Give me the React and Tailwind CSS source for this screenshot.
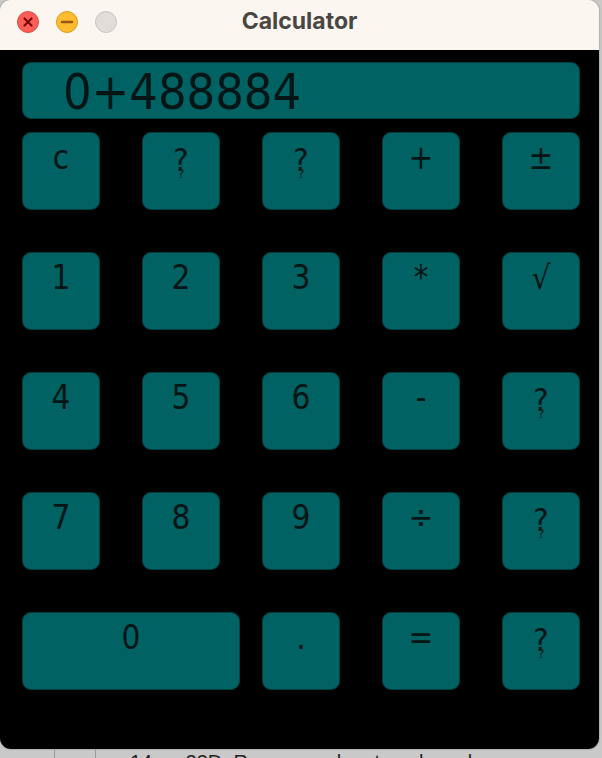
import React from "react";

const font = { fontFamily: '"DejaVu Sans Condensed", "DejaVu Sans", sans-serif', fontStretch: "condensed" };

function Q() {
  return (
    <div className="flex flex-col items-center leading-none">
      <span className="text-[32px] leading-none">?</span>
      <span className="text-[13px] leading-none -mt-[9px]">?</span>
    </div>
  );
}

function Key({ label, className = "w-[78px]" }) {
  return (
    <div
      className={`h-[78px] ${className} shrink-0 rounded-[9px] bg-[#006262] border border-[#023f3f] flex justify-center pt-[7px] text-[#051515]`}
      style={font}
    >
      {label === "?" ? (
        <div className="pt-[4px]"><Q /></div>
      ) : (
        <span className="text-[33px] leading-[1.1]">{label}</span>
      )}
    </div>
  );
}

export default function App() {
  const rows = [
    ["c", "?", "?", "+", "±"],
    ["1", "2", "3", "*", "√"],
    ["4", "5", "6", "-", "?"],
    ["7", "8", "9", "÷", "?"],
  ];
  return (
    <div className="w-[602px] h-[758px] overflow-hidden bg-[#c9c9c9] flex flex-col relative">
      <div className="w-[599px] h-[749px] rounded-[11px] overflow-hidden flex flex-col shrink-0 shadow-[0_0_2px_rgba(0,0,0,0.4)]">
        <div className="h-[50px] bg-[#fcf6f0] flex items-center relative shrink-0">
          <div className="flex items-center gap-[17px] pl-[17px] pb-[6px]">
            <div className="w-[22px] h-[22px] rounded-full bg-[#fd5f58] border border-[#de4640] flex items-center justify-center">
              <svg width="12" height="12" viewBox="0 0 12 12">
                <path d="M2.5 2.5 L9.5 9.5 M9.5 2.5 L2.5 9.5" stroke="#7a0b07" strokeWidth="2.2" strokeLinecap="round" />
              </svg>
            </div>
            <div className="w-[22px] h-[22px] rounded-full bg-[#febc2e] border border-[#dc9b20] flex items-center justify-center">
              <svg width="14" height="4" viewBox="0 0 14 4">
                <path d="M2 2 L12 2" stroke="#985712" strokeWidth="2.5" strokeLinecap="round" />
              </svg>
            </div>
            <div className="w-[22px] h-[22px] rounded-full bg-[#e2ddd9] border border-[#c8c3bf]" />
          </div>
          <div
            className="absolute left-0 right-0 top-[4px] text-center text-[23px] font-bold text-[#4a4643]"
            style={{ fontFamily: 'Inter, "Liberation Sans", sans-serif' }}
          >
            Calculator
          </div>
        </div>
        <div className="flex-1 bg-black px-[22px] pt-[12px]">
          <div className="w-[558px] h-[57px] rounded-[9px] bg-[#006262] border border-[#023f3f] pl-[40px] flex items-center">
            <span className="text-[50px] leading-none text-[#051515] mt-[2px]" style={font}>0+488884</span>
          </div>
          <div className="grid grid-cols-[78px_78px_78px_78px_78px] gap-[42px] mt-[13px]">
            {rows.flat().map((l, i) => (
              <Key key={i} label={l} />
            ))}
          </div>
          <div className="flex mt-[42px]">
            <Key label="0" className="w-[218px]" />
            <div className="flex gap-[42px] ml-[22px]">
              <Key label="." />
              <Key label="=" />
              <Key label="?" />
            </div>
          </div>
        </div>
      </div>
      <div className="h-[9px] relative text-[20px] text-[#222] leading-none overflow-hidden" style={{ fontFamily: '"Liberation Sans", sans-serif' }}>
        <div className="absolute left-[54px] top-0 h-full w-px bg-[#9a9a9a]" />
        <div className="absolute left-[95px] top-0 h-full w-px bg-[#9a9a9a]" />
        <div className="absolute left-[130px] top-[3px] whitespace-nowrap">14&nbsp;&nbsp;&nbsp;&nbsp;&nbsp;&nbsp;23D&nbsp;&nbsp;R&nbsp;&nbsp;&nbsp;&nbsp;&nbsp;&nbsp;&nbsp;&nbsp;&nbsp;&nbsp;&nbsp;&nbsp;&nbsp;&nbsp;&nbsp;&nbsp;l&nbsp;&nbsp;&nbsp;&nbsp;&nbsp;&nbsp;t&nbsp;&nbsp;&nbsp;&nbsp;&nbsp;&nbsp;&nbsp;l&nbsp;&nbsp;&nbsp;&nbsp;&nbsp;&nbsp;&nbsp;&nbsp;l</div>
      </div>
    </div>
  );
}
